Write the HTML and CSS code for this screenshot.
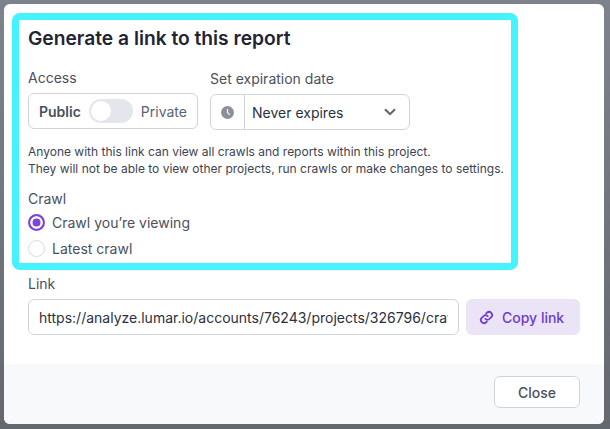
FILE: index.html
```html
<!DOCTYPE html>
<html lang="en">
<head>
    <meta charset="UTF-8">
    <title>Generate a link to this report</title>
    <link rel="stylesheet" href="styles.css">
</head>
<body>
    <div class="modal">
        <div class="modal-body">
            <div class="highlight">
                <h2>Generate a link to this report</h2>
                <div class="options">
                    <div class="access">
                        <div class="label">Access</div>
                        <div class="toggle-box">
                            <b>Public</b>
                            <span class="switch"><span class="knob"></span></span>
                            <span class="private">Private</span>
                        </div>
                    </div>
                    <div class="expiry">
                        <div class="label">Set expiration date</div>
                        <div class="select">
                            <span class="select-icon">
                                <svg width="13" height="13" viewBox="0 0 13 13"><circle cx="6.5" cy="6.5" r="6.5" fill="#8b909c"/><path d="M6.5 3v3.6l2.2 2.2" fill="none" stroke="#fff" stroke-width="1.2"/></svg>
                            </span>
                            <span class="select-value">Never expires</span>
                            <svg class="chevron" width="12" height="8" viewBox="0 0 12 8"><path d="M1 1.2l5 5 5-5" fill="none" stroke="#5c6272" stroke-width="2"/></svg>
                        </div>
                    </div>
                </div>
                <p class="help">Anyone with this link can view all crawls and reports within this project.<br>They will not be able to view other projects, run crawls or make changes to settings.</p>
                <div class="label crawl-label">Crawl</div>
                <div class="radio-row"><span class="radio checked"></span>Crawl you’re viewing</div>
                <div class="radio-row"><span class="radio"></span>Latest crawl</div>
            </div>
            <div class="label link-label">Link</div>
            <div class="link-row">
                <div class="link-input"><span>https://analyze.lumar.io/accounts/76243/projects/326796/craw</span></div>
                <button class="copy-btn">
                    <svg width="15" height="15" viewBox="0 0 24 24" fill="none" stroke="#6d3bd1" stroke-width="2.8" stroke-linecap="round"><path d="M10 14a5 5 0 0 0 7 0l3-3a5 5 0 0 0-7-7l-1.5 1.5"/><path d="M14 10a5 5 0 0 0-7 0l-3 3a5 5 0 0 0 7 7l1.5-1.5"/></svg>
                    Copy link
                </button>
            </div>
        </div>
        <div class="modal-footer">
            <button class="close-btn">Close</button>
        </div>
    </div>
</body>
</html>
```

FILE: styles.css
```css
* {
    box-sizing: border-box;
}
html, body {
    height: 100%;
}
body {
    margin: 0;
    padding: 4px 6px 5px 4px;
    overflow: hidden;
    font-family: Inter, 'Liberation Sans', sans-serif;
    color: #4a5060;
    background: linear-gradient(#7d828c, #646970);
}
.modal {
    width: 600px;
    height: 420px;
    background-color: white;
    border-radius: 6px;
    overflow: hidden;
    display: flex;
    flex-direction: column;
}
.modal-body {
    height: 360px;
    padding: 9px 24px 0 8px;
}
.highlight {
    width: 506px;
    height: 257px;
    border: 7px solid #45f3ff;
    border-radius: 8px;
    padding: 0 0 0 9px;
}
h2 {
    margin: 0;
    padding-top: 6px;
    font-size: 19.2px;
    line-height: 24px;
    font-weight: 600;
    color: #1f2533;
}
.label {
    font-size: 14px;
    line-height: 20px;
    color: #4a5060;
}
.options {
    display: flex;
    gap: 12px;
    margin-top: 18px;
}
.access .label {
    margin-bottom: 5px;
}
.expiry {
    padding-top: 1px;
}
.expiry .label {
    margin-bottom: 5px;
}
.toggle-box {
    width: 170px;
    height: 36px;
    border: 1px solid #d2d4dc;
    border-radius: 6px;
    display: flex;
    align-items: center;
    padding: 0 10px;
    font-size: 14px;
}
.toggle-box b {
    font-weight: 600;
}
.switch {
    width: 44px;
    height: 24px;
    margin: 0 8px;
    padding: 2px;
    background-color: #e5e6eb;
    border-radius: 12px;
}
.knob {
    display: block;
    width: 20px;
    height: 20px;
    background-color: white;
    border-radius: 50%;
}
.private {
    color: #5c6272;
}
.select {
    width: 200px;
    height: 36px;
    border: 1px solid #d2d4dc;
    border-radius: 6px;
    display: flex;
    align-items: center;
    font-size: 14px;
    color: #2b3040;
}
.select-icon {
    width: 34px;
    height: 100%;
    border-right: 1px solid #d2d4dc;
    display: flex;
    align-items: center;
    justify-content: center;
}
.select-value {
    flex: 1;
    padding-left: 7px;
}
.chevron {
    margin-right: 13px;
}
.help {
    margin: 13px 0 0;
    font-size: 12px;
    line-height: 17px;
    white-space: nowrap;
    color: #3d4352;
}
.crawl-label {
    margin-top: 12px;
}
.radio-row {
    display: flex;
    align-items: center;
    height: 26px;
    font-size: 14px;
    color: #4a5060;
}
.radio {
    width: 17px;
    height: 17px;
    margin-right: 7px;
    border: 1.5px solid #d8dae1;
    border-radius: 50%;
}
.radio.checked {
    border: 2px solid #7a45dc;
    background-color: #7a45dc;
    box-shadow: inset 0 0 0 2.5px white;
}
.link-label {
    margin: 4px 0 0 16px;
}
.link-row {
    display: flex;
    gap: 7px;
    margin: 5px 0 0 16px;
}
.link-input {
    width: 431px;
    height: 36px;
    border: 1px solid #d2d4dc;
    border-radius: 6px;
    padding: 0 10px;
    display: flex;
    align-items: center;
    font-size: 14px;
    color: #2b3040;
}
.link-input span {
    display: block;
    overflow: hidden;
    white-space: nowrap;
}
button {
    font-family: inherit;
    font-size: 14px;
    cursor: pointer;
}
.copy-btn {
    width: 114px;
    height: 36px;
    border: none;
    border-radius: 6px;
    background-color: #ebe3f6;
    color: #6d3bd1;
    font-weight: 500;
    display: flex;
    align-items: center;
    gap: 8px;
    padding: 0 0 0 13px;
}
.modal-footer {
    flex: 1;
    background-color: #f8f9fb;
    display: flex;
    justify-content: flex-end;
    align-items: flex-start;
    padding: 12px 24px 0 0;
}
.close-btn {
    width: 86px;
    height: 32px;
    border: 1px solid #d2d4dc;
    border-radius: 6px;
    background-color: white;
    color: #4a5060;
    font-weight: 500;
}
```
